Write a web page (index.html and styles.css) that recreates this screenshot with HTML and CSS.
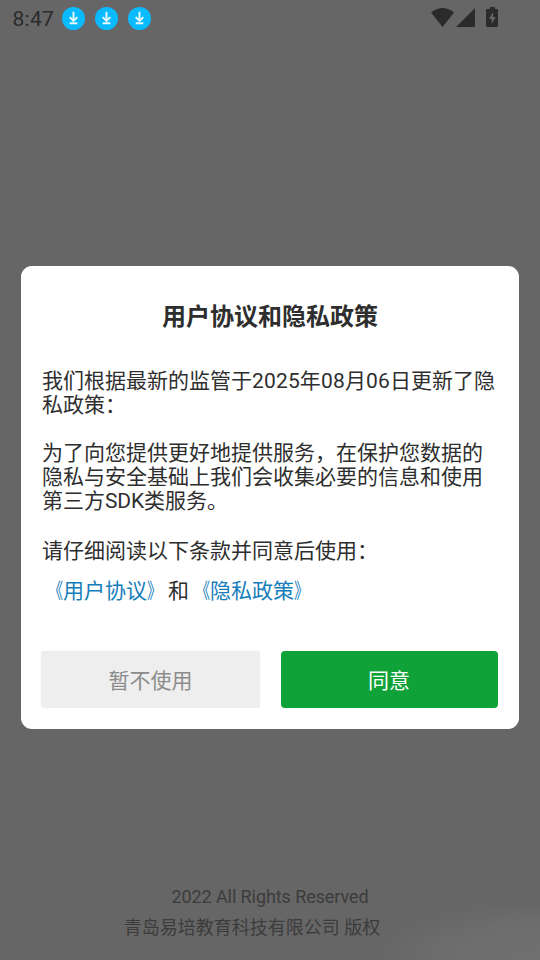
FILE: index.html
```html
<!DOCTYPE html>
<html lang="zh-CN">
<head>
<meta charset="utf-8">
<title>用户协议和隐私政策</title>
<link rel="stylesheet" href="styles.css">
</head>
<body>
<div class="screen">
  <header class="status">
    <span class="time">8:47</span>
    <div class="downloads">
      <svg viewBox="0 0 24 24"><circle cx="12" cy="12" r="12"/><path d="M12 5v9M8 10.500l4 4 4-4M8 17h8"/></svg>
      <svg viewBox="0 0 24 24"><circle cx="12" cy="12" r="12"/><path d="M12 5v9M8 10.500l4 4 4-4M8 17h8"/></svg>
      <svg viewBox="0 0 24 24"><circle cx="12" cy="12" r="12"/><path d="M12 5v9M8 10.500l4 4 4-4M8 17h8"/></svg>
    </div>
    <svg class="system" viewBox="0 0 68 21">
      <path d="M0 5.500Q11.500-3.500 23 5.500L11.500 20Z"/>
      <path d="M44 1v19H25Z"/>
      <path fill-rule="evenodd" d="M59 0h5v2h2q1 0 1 1v16q0 1-1 1H56q-1 0-1-1V3q0-1 1-1h3ZM62 5l-4 7h2.700v5l4-7H62Z"/>
    </svg>
  </header>
  <main class="dialog">
    <h1>用户协议和隐私政策</h1>
    <p class="intro">我们根据最新的监管于<span class="date">2025年08月06</span>日更新了隐<br>私政策：</p>
    <p class="reason">为了向您提供更好地提供服务，在保护您数据的<br>隐私与安全基础上我们会收集必要的信息和使用<br>第三方<span class="latin">SDK</span>类服务。</p>
    <p class="prompt">请仔细阅读以下条款并同意后使用：</p>
    <p class="links"><a><span class="open">《</span>用户协议<span class="close">》</span></a>和<a><span class="open">《</span>隐私政策<span class="close">》</span></a></p>
    <div class="actions">
      <button class="decline">暂不使用</button>
      <button class="accept">同意</button>
    </div>
  </main>
  <footer class="footer">
    <div class="rights">2022 All Rights Reserved</div>
    <div class="company">青岛易培教育科技有限公司 版权</div>
  </footer>
</div>
</body>
</html>
```
FILE: styles.css
```css
* {
  box-sizing: border-box;
}

body {
  margin: 0;
  font-family: Roboto, "Noto Sans CJK SC", sans-serif;
}

.screen {
  display: flex;
  flex-direction: column;
  width: 540px;
  height: 960px;
  overflow: hidden;
  background: radial-gradient(ellipse 165px 60px at 540px 960px, #707070 0%, #6d6d6d 60%, #666 100%) #666;
}

.status {
  display: flex;
  align-items: center;
  height: 38px;
  padding: 0 41px 0 12.5px;
  color: #2b2b2b;
}

.time {
  width: 49.5px;
  font-size: 21px;
  line-height: 24px;
  letter-spacing: 0.3px;
}

.downloads {
  display: flex;
  gap: 10px;
  margin-top: -1px;
}

.downloads svg {
  width: 23px;
  height: 23px;
}

.downloads circle {
  fill: #0abaff;
}

.downloads path {
  fill: none;
  stroke: #e8faff;
  stroke-width: 2;
}

.system {
  width: 68px;
  height: 21px;
  margin: -3px 0 0 auto;
  fill: #2b2b2b;
}

.dialog {
  width: 498px;
  height: 463px;
  margin: 228px 21px 0;
  padding: 36px 21px 0;
  border-radius: 11px;
  background: #fff;
  color: #2e2e2e;
  font-size: 21px;
  line-height: 24px;
}

.dialog h1 {
  margin: 0 0 37px;
  font-size: 24px;
  line-height: 30px;
  font-weight: 700;
  text-align: center;
}

.dialog p {
  margin: 0;
  white-space: nowrap;
}

.date {
  letter-spacing: 0.16px;
}

.latin {
  letter-spacing: -0.15px;
}

.dialog .reason {
  margin-top: 24px;
}

.dialog .prompt {
  margin-top: 26px;
}

.dialog .links {
  margin-top: 16px;
}

.links a {
  color: #157dba;
}

.open,
.close {
  display: inline-block;
  transform: scaleX(0.72);
}

.open {
  transform-origin: 100% 50%;
}

.close {
  transform-origin: 0 50%;
}

.actions {
  display: flex;
  justify-content: space-between;
  margin: 48px 0 0 -1px;
}

.actions button {
  width: 217px;
  height: 57px;
  padding: 2px 0 0;
  border: 0;
  border-radius: 4px;
  font: inherit;
}

.actions .decline {
  width: 219px;
  background: #eee;
  color: #8b8b8b;
  box-shadow: 0 0 1px #ddd;
}

.actions .accept {
  padding-right: 1px;
  background: #0fa238;
  color: #fff;
}

.footer {
  margin-top: 155px;
  color: #3c3c3c;
  font-size: 18px;
  line-height: 26px;
  text-align: center;
}

.rights {
  letter-spacing: -0.08px;
}

.company {
  margin-top: 5px;
  padding-right: 36px;
}
```
